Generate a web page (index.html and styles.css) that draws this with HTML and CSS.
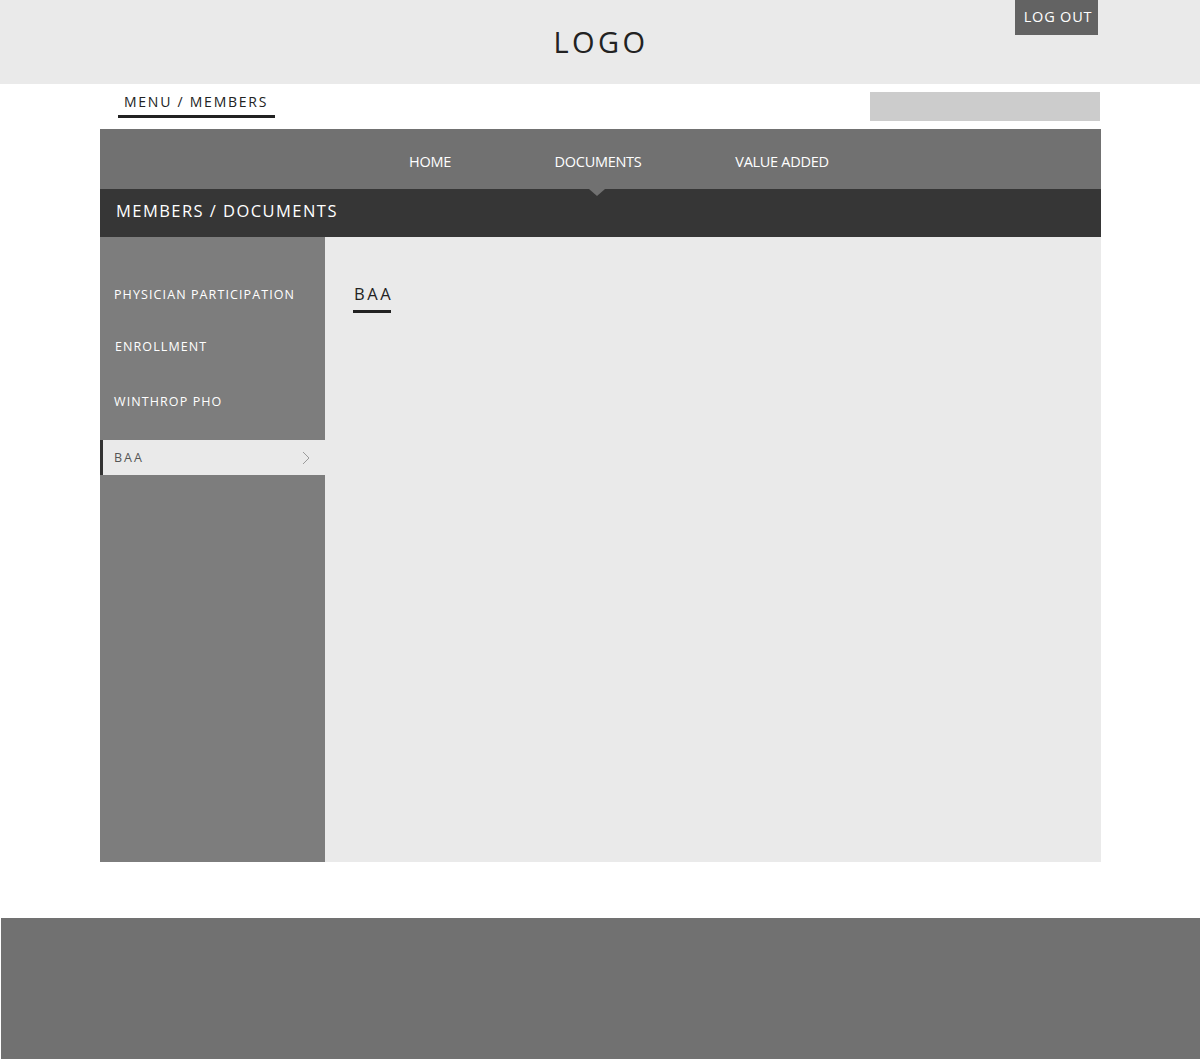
FILE: index.html
```html
<!DOCTYPE html>
<html>
<head>
<meta charset="utf-8">
<link rel="stylesheet" href="styles.css">
</head>
<body>
<header class="masthead">
  <div class="logo">LOGO</div>
  <a class="logout">LOG OUT</a>
</header>
<div class="wrap">
  <div class="toprow">
    <div class="crumb">MENU / MEMBERS</div>
    <div class="search"></div>
  </div>
  <nav class="mainnav">
    <a class="nav-item home">HOME</a>
    <a class="nav-item docs active">DOCUMENTS</a>
    <a class="nav-item value">VALUE ADDED</a>
  </nav>
  <div class="titlebar">MEMBERS / DOCUMENTS</div>
  <div class="body">
    <aside class="sidebar">
      <a class="side-item s1">PHYSICIAN PARTICIPATION</a>
      <a class="side-item s2">ENROLLMENT</a>
      <a class="side-item s3">WINTHROP PHO</a>
      <a class="side-item active">BAA
        <svg class="chev" width="8" height="14" viewBox="0 0 8 14"><path d="M1 1 L7 7 L1 13" fill="none" stroke="#9a9a9a" stroke-width="1"/></svg>
      </a>
    </aside>
    <main class="content">
      <h2 class="heading">BAA</h2>
    </main>
  </div>
</div>
<footer class="footer"></footer>
</body>
</html>
```
FILE: styles.css
```css
* { box-sizing: border-box; }
html, body { margin: 0; padding: 0; background: #fff; }
body { font-family: "Open Sans", "Noto Sans", sans-serif; width: 1200px; height: 1059px; overflow: hidden; }
a { text-decoration: none; }

.masthead {
  position: relative;
  height: 84px;
  background: #eaeaea;
  display: flex;
  justify-content: center;
  align-items: center;
}
.logo {
  font-size: 29px;
  letter-spacing: 3.4px;
  color: #222;
  margin-left: 2px;
  margin-bottom: 2px;
}
.logout {
  position: absolute;
  left: 1015px;
  top: 0;
  width: 83px;
  height: 35px;
  background: #636363;
  color: #fff;
  font-size: 14.5px;
  letter-spacing: 0.8px;
  display: flex;
  align-items: center;
  justify-content: center;
  padding: 0 0 3px 3px;
}

.wrap { width: 1001px; margin-left: 100px; }

.toprow {
  height: 45px;
  display: flex;
  justify-content: space-between;
  align-items: flex-start;
}
.crumb {
  margin-left: 18px;
  margin-top: 8px;
  padding: 0 7px 4px 6px;
  border-bottom: 3px solid #222;
  font-size: 14px;
  letter-spacing: 1.75px;
  color: #222;
  line-height: 19px;
}
.search {
  width: 230px;
  height: 29px;
  margin-top: 8px;
  margin-right: 1px;
  background: #cccccc;
}

.mainnav {
  height: 60px;
  background: #717171;
  display: flex;
  padding-left: 246px;
}
.nav-item {
  position: relative;
  color: #fff;
  font-size: 14.5px;
  letter-spacing: -0.3px;
  display: flex;
  align-items: center;
  justify-content: center;
  padding-top: 4px;
}
.home { width: 168px; }
.docs { width: 168px; }
.value { width: 200px; }
.nav-item.active::after {
  content: "";
  position: absolute;
  left: 50%;
  bottom: -7px;
  margin-left: -9px;
  border-left: 8px solid transparent;
  border-right: 8px solid transparent;
  border-top: 7px solid #717171;
}

.titlebar {
  height: 48px;
  background: #363636;
  color: #fff;
  font-size: 16.5px;
  letter-spacing: 1.45px;
  padding-left: 16px;
  padding-bottom: 5px;
  display: flex;
  align-items: center;
}

.body { display: flex; height: 625px; }
.sidebar {
  width: 225px;
  background: #7d7d7d;
  display: flex;
  flex-direction: column;
  padding-top: 47px;
}
.side-item {
  color: #fff;
  font-size: 12.5px;
  letter-spacing: 1.1px;
  padding-left: 14px;
  height: 22px;
  line-height: 22px;
}
.s2 { margin-top: 30px; padding-left: 15px; }
.s3 { margin-top: 33px; }
.side-item.active {
  margin-top: 27px;
  height: 35px;
  line-height: 35px;
  background: #eaeaea;
  color: #555;
  border-left: 3px solid #333;
  padding-left: 11px;
  letter-spacing: 2px;
  display: flex;
  align-items: center;
  justify-content: space-between;
  padding-right: 15px;
}
.chev { display: block; }

.content {
  flex: 1;
  background: #eaeaea;
  padding: 46px 0 0 28px;
}
.heading {
  width: 38px;
  white-space: nowrap;
  margin: 0;
  font-weight: normal;
  font-size: 16.5px;
  letter-spacing: 2.6px;
  color: #222;
  line-height: 22px;
  padding: 0 0 5px 1px;
  border-bottom: 3px solid #222;
}

.footer {
  margin-top: 56px;
  margin-left: 1px;
  height: 141px;
  background: #717171;
}
```
